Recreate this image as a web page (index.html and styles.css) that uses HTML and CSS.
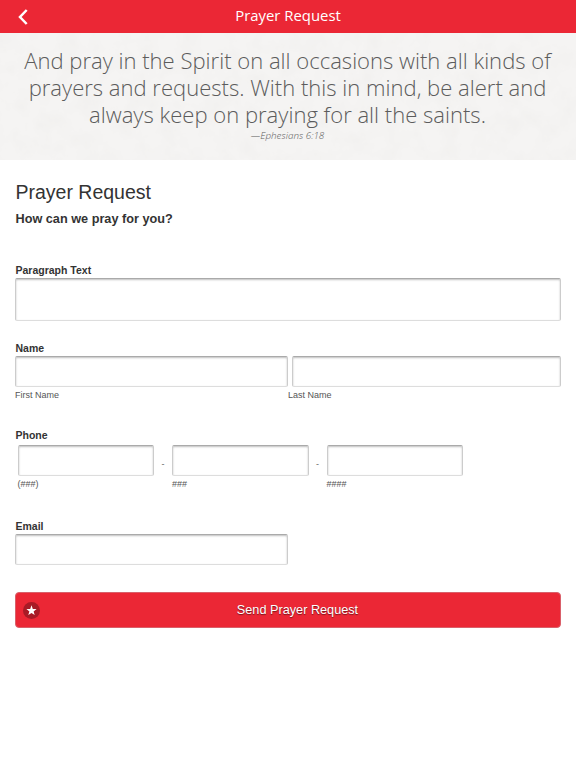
FILE: index.html
```html
<!DOCTYPE html>
<html lang="en">
<head>
  <meta charset="UTF-8" />
  <meta name="viewport" content="width=device-width, initial-scale=1.0"/>
  <title>Prayer Request</title>
  <link rel="stylesheet" href="styles.css">
</head>
<body>
  <header class="header">
    <a href="#" class="back" aria-label="Back">
      <svg width="10" height="16" viewBox="0 0 10 16"><path d="M8.7 1 L2 8 L8.7 15" fill="none" stroke="#fff" stroke-width="2.5"/></svg>
    </a>
    <span class="header-title">Prayer Request</span>
  </header>

  <section class="verse">
    <p class="verse-text">And pray in the Spirit on all occasions with all kinds of<br>prayers and requests. With this in mind, be alert and<br>always keep on praying for all the saints.</p>
    <p class="verse-ref">—Ephesians 6:18</p>
  </section>

  <form class="form">
    <h1>Prayer Request</h1>
    <h2>How can we pray for you?</h2>

    <div class="field field-message">
      <label for="message">Paragraph Text</label>
      <textarea id="message"></textarea>
    </div>

    <div class="field field-name">
      <label for="first">Name</label>
      <div class="name-row">
        <input type="text" id="first">
        <input type="text" id="last">
      </div>
      <div class="name-captions">
        <span class="caption">First Name</span>
        <span class="caption">Last Name</span>
      </div>
    </div>

    <div class="field field-phone">
      <label for="area">Phone</label>
      <div class="phone-row">
        <div class="phone-part"><input type="tel" id="area"><span class="caption">(###)</span></div>
        <span class="dash">-</span>
        <div class="phone-part"><input type="tel"><span class="caption">###</span></div>
        <span class="dash">-</span>
        <div class="phone-part"><input type="tel"><span class="caption">####</span></div>
      </div>
    </div>

    <div class="field field-email">
      <label for="email">Email</label>
      <input type="email" id="email">
    </div>

    <button type="button" class="send">
      <svg class="star" width="17" height="17" viewBox="0 0 17 17"><circle cx="8.5" cy="8.5" r="8.5" fill="#a81b26"/><path d="M8.5 3.2 L9.8 6.9 L13.6 7 L10.6 9.4 L11.7 13.1 L8.5 10.9 L5.3 13.1 L6.4 9.4 L3.4 7 L7.2 6.9 Z" fill="#fff"/></svg>
      <span class="send-text">Send Prayer Request</span>
    </button>
  </form>
</body>
</html>
```

FILE: styles.css
```css
* {
  box-sizing: border-box;
}

body {
  margin: 0;
  font-family: "Liberation Sans", Arial, sans-serif;
  background-color: #fff;
  color: #333;
}

.header {
  display: grid;
  grid-template-columns: 60px 1fr 60px;
  align-items: center;
  height: 33px;
  background-color: #eb2735;
  color: white;
}

.back {
  display: flex;
  padding-left: 18px;
}

.header-title {
  padding-bottom: 2px;
  text-align: center;
  font-family: "Open Sans", sans-serif;
  font-size: 14.9px;
  line-height: 31px;
}

/* paper texture */
.verse {
  height: 127px;
  padding: 14px 1px 0 0;
  text-align: center;
  font-family: "Open Sans", sans-serif;
  font-weight: 300;
  color: #5c5c5c;
  background-color: #f5f4f3;
  background-image: url("data:image/svg+xml,%3Csvg xmlns='http://www.w3.org/2000/svg' width='576' height='127'%3E%3Cfilter id='n' x='0' y='0' width='100%25' height='100%25'%3E%3CfeTurbulence type='fractalNoise' baseFrequency='.05' numOctaves='5' seed='4'/%3E%3CfeColorMatrix values='0 0 0 0 .78 0 0 0 0 .77 0 0 0 0 .75 .4 0 0 0 -.15'/%3E%3C/filter%3E%3Crect width='576' height='127' filter='url(%23n)'/%3E%3C/svg%3E");
}

.verse-text {
  margin: 0;
  font-size: 22.05px;
  line-height: 27px;
}

.verse-ref {
  margin: 0;
  font-size: 9.9px;
  font-style: italic;
  line-height: 15px;
}

.form {
  padding: 20px 15px 0;
}

h1 {
  margin: 0;
  font-size: 19.5px;
  font-weight: normal;
  line-height: 24px;
}

h2 {
  margin: 7px 0 0;
  font-size: 12.7px;
  line-height: 16px;
}

.field {
  display: flex;
  flex-direction: column;
}

label {
  margin-bottom: 1px;
  font-size: 10.5px;
  font-weight: bold;
  line-height: 14px;
}

h1,
h2,
label {
  padding-left: 0.5px;
}

input,
textarea {
  display: block;
  width: 100%;
  height: 31px;
  margin: 0;
  border: 1px solid #ccc;
  border-top-color: #aaa;
  border-bottom-color: #ddd;
  border-radius: 2px;
  background-color: #fff;
  box-shadow: inset 0 1px 2px rgba(0, 0, 0, 0.25);
  resize: none;
}

textarea {
  height: 43px;
}

.caption {
  display: block;
  margin-top: 2px;
  font-size: 9px;
  line-height: 12px;
  color: #555;
}

.field-message {
  margin-top: 36px;
}

.field-name {
  margin-top: 20px;
}

.name-row {
  display: grid;
  grid-template-columns: 273px 1fr;
  gap: 4px;
}

.name-captions {
  display: grid;
  grid-template-columns: 1fr 1fr;
}

.field-phone {
  margin-top: 27px;
}

.phone-row {
  display: flex;
  padding: 2px 0 0 2.5px;
}

.phone-part {
  width: 136.5px;
}

.dash {
  width: 18px;
  padding-top: 12px;
  text-align: center;
  font-size: 9px;
  line-height: 14px;
  color: #666;
}

.field-email {
  width: 273px;
  margin-top: 29px;
}

.send {
  display: grid;
  grid-template-columns: 19px 1fr;
  align-items: center;
  width: 100%;
  height: 36px;
  margin-top: 27px;
  padding: 0 7px;
  border: 1px solid #d9606a;
  border-radius: 4px;
  background-color: #eb2735;
  color: white;
  font-family: "Liberation Sans", Arial, sans-serif;
  font-size: 12.7px;
  text-shadow: 0 1px 1px rgba(0, 0, 0, 0.5);
}
```
